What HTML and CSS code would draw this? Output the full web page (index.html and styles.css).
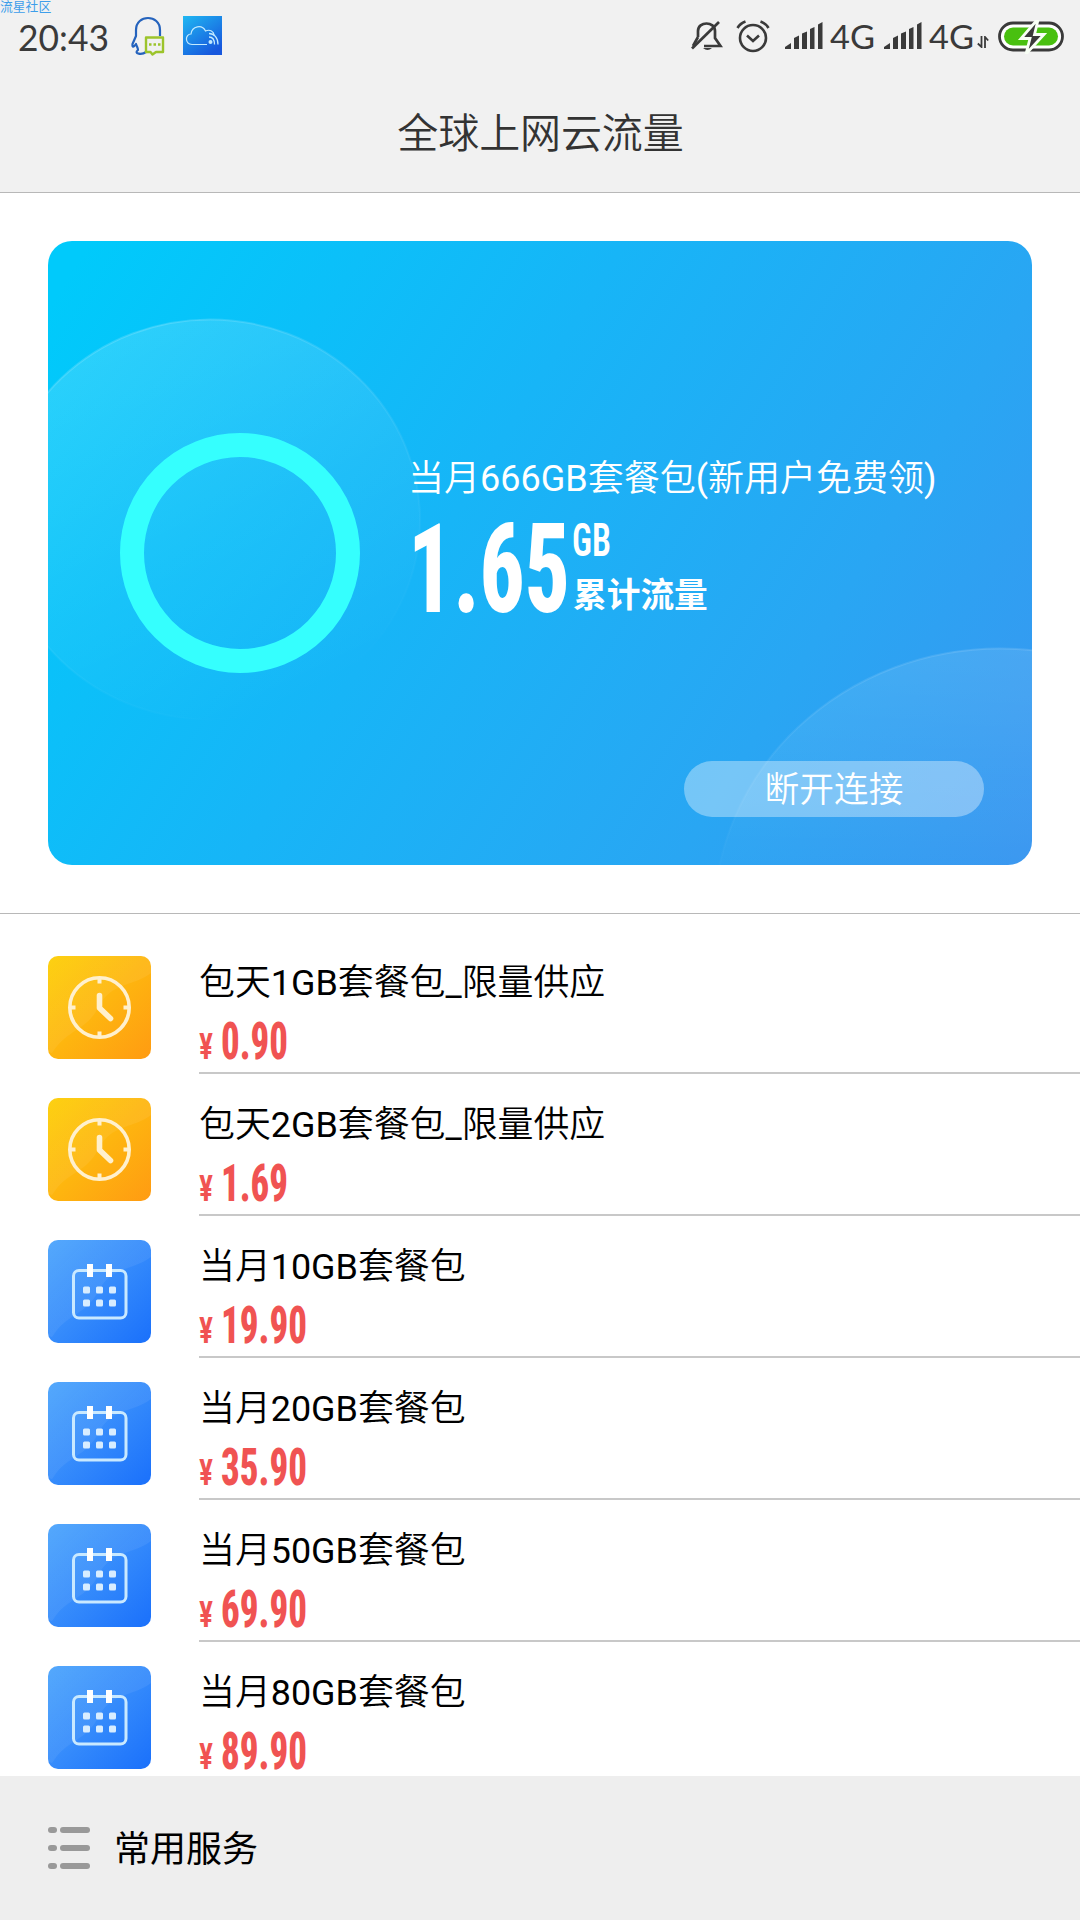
FILE: index.html
```html
<!DOCTYPE html>
<html lang="zh-CN">
<head>
<meta charset="utf-8">
<title>全球上网云流量</title>
<link rel="stylesheet" href="styles.css">
</head>
<body>
<svg class="defs" width="0" height="0" aria-hidden="true">
  <defs>
    <linearGradient id="gold" x1="0" y1="0" x2="1" y2="1"><stop offset="0" stop-color="#fdd00c"/><stop offset="1" stop-color="#ff9b12"/></linearGradient>
    <linearGradient id="blue" x1="0" y1="0" x2="1" y2="1"><stop offset="0" stop-color="#51a7fc"/><stop offset="1" stop-color="#1a70fb"/></linearGradient>
    <linearGradient id="sheen" x1="0" y1="0" x2="1" y2="1"><stop offset="0" stop-color="#fff" stop-opacity=".02"/><stop offset="1" stop-color="#fff" stop-opacity=".1"/></linearGradient>
    <symbol id="clock" viewBox="0 0 103 103">
      <rect width="103" height="103" rx="10" fill="url(#gold)"/>
      <path d="M0 10Q0 0 10 0H93Q103 0 103 10V17C84 31 64 26 51 50C38 76 20 72 4 97Q0 96 0 93Z" fill="url(#sheen)"/>
      <circle cx="51.500" cy="51.500" r="29.700" fill="none" stroke="#fff0cd" stroke-width="3.600"/>
      <path d="M51.500 23v4.500M51.500 75.500v4.500M23 51.500h4.500M75.500 51.500h4.500" stroke="#fff0cd" stroke-width="4"/>
      <path d="M51.500 39.500V52L62.500 62.500" fill="none" stroke="#fff0cd" stroke-width="5.600" stroke-linecap="round" stroke-linejoin="round"/>
    </symbol>
    <symbol id="calendar" viewBox="0 0 103 103">
      <rect width="103" height="103" rx="10" fill="url(#blue)"/>
      <path d="M0 10Q0 0 10 0H93Q103 0 103 10V17C84 31 64 26 51 50C38 76 20 72 4 97Q0 96 0 93Z" fill="url(#sheen)"/>
      <rect x="25.500" y="30.500" width="52.500" height="47.500" rx="5.500" fill="none" stroke="#c9e9ff" stroke-width="3"/>
      <path d="M39 24h6v13h-6zM58 24h6v13h-6z" fill="#fff"/>
      <g fill="#d8edff"><rect x="35" y="46.500" width="7" height="7" rx="1.500"/><rect x="48" y="46.500" width="7" height="7" rx="1.500"/><rect x="61" y="46.500" width="7" height="7" rx="1.500"/><rect x="35" y="59.500" width="7" height="7" rx="1.500"/><rect x="48" y="59.500" width="7" height="7" rx="1.500"/><rect x="61" y="59.500" width="7" height="7" rx="1.500"/></g>
    </symbol>
    <symbol id="signal" viewBox="0 0 40 30">
      <path d="M1 28v-2l6-4v6zM10 28V17l5-2.500V28zM18 28V12.500l5-2V28zM26 28V8l4.500-2V28zM34 28V3.500L38.500 1V28z" fill="#3a3a3a"/>
    </symbol>
  </defs>
</svg>

<header class="top">
  <span class="watermark">流星社区</span>
  <div class="status">
    <svg class="time" width="96" height="44"><text x="0" y="31" textLength="91" lengthAdjust="spacingAndGlyphs">20:43</text></svg>
    <svg class="qq" width="36" height="40" viewBox="0 0 36 40" fill="none">
      <path d="M31 20V14C31 -2 7 -2 7 14V20L3.500 28C3 32 5 31 7 28C8 31 9 32 9 34C4 38 13 39 17 36" stroke="#2563bd" stroke-width="2.200" stroke-linejoin="round"/>
      <path d="M17 21.500h17V36H27l-3.500 2.500L21.500 36H17z" stroke="#9cc42b" stroke-width="2.400" stroke-linejoin="round" fill="#f1f1f1"/>
      <path d="M20 28.500h2.500M24.500 28.500h2.500M29 28.500h2.500" stroke="#9cc42b" stroke-width="2.600"/>
    </svg>
    <svg class="cloud" width="39" height="39" viewBox="0 0 39 39" fill="none">
      <defs><linearGradient id="sky" x1="0" y1="0" x2=".7" y2="1"><stop offset="0" stop-color="#20b8f2"/><stop offset="1" stop-color="#1757dd"/></linearGradient></defs>
      <rect width="39" height="39" fill="url(#sky)"/>
      <path d="M24 28.500H9C1.500 28 2 18 8 18C9 10 19 8 22.500 15C27 13 31 15.500 31 19" stroke="#c3eaff" stroke-width="1.200"/>
      <path d="M26 17.500c5 0 9 4 9 11M26 21c3.500 0 5.500 3 5.500 7.500" stroke="#c3eaff" stroke-width="1.300"/><circle cx="27.500" cy="26" r="2" fill="#c3eaff"/>
    </svg>
    <span class="spacer"></span>
    <svg class="bell" width="32" height="34" viewBox="0 0 32 34" fill="none" stroke="#3a3a3a" stroke-width="2.700">
      <path d="M7 19V13C7 3 24 3 24 13V20L29.500 28H13M7 19L2 28"/>
      <path d="M1 30.500L28 4"/><path d="M12 30h9q-4.500 4-9 0z" fill="#3a3a3a" stroke="none"/>
    </svg>
    <svg class="alarm" width="34" height="34" viewBox="0 0 34 34" fill="none" stroke="#3a3a3a" stroke-width="2.600">
      <circle cx="17" cy="19" r="13"/><path d="M11 16.500l6 5.500 6-5.500M1.500 9Q4 4.500 9.500 2.500M32.500 9Q30 4.500 24.500 2.500"/>
    </svg>
    <svg class="bars" width="40" height="30"><use href="#signal"/></svg>
    <svg class="net" width="47" height="44"><text x="1" y="31.500" textLength="45" lengthAdjust="spacingAndGlyphs">4G</text></svg>
    <svg class="bars second" width="40" height="30"><use href="#signal"/></svg>
    <svg class="net" width="47" height="44"><text x="1" y="31.500" textLength="45" lengthAdjust="spacingAndGlyphs">4G</text></svg>
    <svg class="arrows" width="12" height="12" viewBox="0 0 12 12" fill="none" stroke="#3a3a3a" stroke-width="1.800"><path d="M4.500 0v11L.8 7.500M8 12V1l3.200 3.500"/></svg>
    <svg class="battery" width="66" height="34" viewBox="0 0 66 34">
      <rect x="1.500" y="3" width="63" height="27" rx="13.500" fill="#fff" stroke="#3a3a3a" stroke-width="2.800"/>
      <rect x="6" y="7.500" width="54" height="18" rx="9" fill="#49c010"/>
      <path d="M39 0L23 18.500H32L28 34L46 14.500H36.500L40 0z" fill="#3a3a3a" stroke="#f8fff5" stroke-width="2.800"/>
    </svg>
  </div>
  <h1>全球上网云流量</h1>
</header>

<main>
  <section class="summary">
    <div class="card">
      <svg class="decor" viewBox="0 0 984 624" aria-hidden="true">
        <defs>
          <linearGradient id="orbA" x1=".1" y1="0" x2=".6" y2="1"><stop offset="0" stop-color="#fff" stop-opacity=".18"/><stop offset=".6" stop-color="#fff" stop-opacity=".06"/><stop offset="1" stop-color="#fff" stop-opacity="0"/></linearGradient>
          <linearGradient id="orbB" x1="0" y1="0" x2="0" y2="1"><stop offset="0" stop-color="#fff" stop-opacity=".11"/><stop offset=".42" stop-color="#fff" stop-opacity=".01"/></linearGradient>
        </defs>
        <ellipse cx="162" cy="278.500" rx="210" ry="200" fill="url(#orbA)" stroke="url(#orbA)" stroke-width="2"/>
        <ellipse cx="952" cy="677.500" rx="286" ry="270" fill="url(#orbB)" stroke="url(#orbB)" stroke-width="2"/>
      </svg>
      <div class="usage">
        <div class="ring"></div>
        <div class="detail">
          <p class="plan">当月<b>666GB</b>套餐包<b>(</b>新用户免费领<b>)</b></p>
          <div class="amount">
            <svg class="din" width="162" height="92"><text class="big" x="0" y="89.500" textLength="162" lengthAdjust="spacingAndGlyphs">1.65</text></svg>
            <div class="unit">
              <svg class="din" width="40" height="36"><text class="gb" x="-1" y="34" textLength="39" lengthAdjust="spacingAndGlyphs">GB</text></svg>
              <span class="total">累计流量</span>
            </div>
          </div>
        </div>
      </div>
      <button class="disconnect">断开连接</button>
    </div>
  </section>

  <ul class="plans">
    <li class="row"><svg class="icon"><use href="#clock"/></svg><div class="info"><span class="name">包天<b>1GB</b>套餐包<b>_</b>限量供应</span><svg class="price" width="140" height="64"><text class="yen" x="0" y="51" textLength="14" lengthAdjust="spacingAndGlyphs">¥</text><text class="num" x="22" y="51" textLength="67" lengthAdjust="spacingAndGlyphs">0.90</text></svg></div></li>
    <li class="row"><svg class="icon"><use href="#clock"/></svg><div class="info"><span class="name">包天<b>2GB</b>套餐包<b>_</b>限量供应</span><svg class="price" width="140" height="64"><text class="yen" x="0" y="51" textLength="14" lengthAdjust="spacingAndGlyphs">¥</text><text class="num" x="22" y="51" textLength="67" lengthAdjust="spacingAndGlyphs">1.69</text></svg></div></li>
    <li class="row"><svg class="icon"><use href="#calendar"/></svg><div class="info"><span class="name">当月<b>10GB</b>套餐包</span><svg class="price" width="140" height="64"><text class="yen" x="0" y="51" textLength="14" lengthAdjust="spacingAndGlyphs">¥</text><text class="num" x="22" y="51" textLength="86" lengthAdjust="spacingAndGlyphs">19.90</text></svg></div></li>
    <li class="row"><svg class="icon"><use href="#calendar"/></svg><div class="info"><span class="name">当月<b>20GB</b>套餐包</span><svg class="price" width="140" height="64"><text class="yen" x="0" y="51" textLength="14" lengthAdjust="spacingAndGlyphs">¥</text><text class="num" x="22" y="51" textLength="86" lengthAdjust="spacingAndGlyphs">35.90</text></svg></div></li>
    <li class="row"><svg class="icon"><use href="#calendar"/></svg><div class="info"><span class="name">当月<b>50GB</b>套餐包</span><svg class="price" width="140" height="64"><text class="yen" x="0" y="51" textLength="14" lengthAdjust="spacingAndGlyphs">¥</text><text class="num" x="22" y="51" textLength="86" lengthAdjust="spacingAndGlyphs">69.90</text></svg></div></li>
    <li class="row"><svg class="icon"><use href="#calendar"/></svg><div class="info"><span class="name">当月<b>80GB</b>套餐包</span><svg class="price" width="140" height="64"><text class="yen" x="0" y="51" textLength="14" lengthAdjust="spacingAndGlyphs">¥</text><text class="num" x="22" y="51" textLength="86" lengthAdjust="spacingAndGlyphs">89.90</text></svg></div></li>
  </ul>
</main>

<footer class="services">
  <svg width="42" height="42" viewBox="0 0 42 42" fill="#999"><rect width="9" height="6" rx="3"/><rect x="12" width="30" height="6" rx="3"/><rect y="18" width="9" height="6" rx="3"/><rect x="12" y="18" width="30" height="6" rx="3"/><rect y="36" width="9" height="6" rx="3"/><rect x="12" y="36" width="30" height="6" rx="3"/></svg>
  <span>常用服务</span>
</footer>
</body>
</html>
```
FILE: styles.css
```css
* { box-sizing: border-box; margin: 0; padding: 0; }
body {
  width: 1080px;
  height: 1920px;
  overflow: hidden;
  display: flex;
  flex-direction: column;
  background: #fff;
  color: #000;
  font-family: Roboto, "Noto Sans CJK SC", sans-serif;
}
svg { display: block; flex: none; }
b { font-weight: 400; }
.defs { position: absolute; }

.top {
  position: relative;
  flex: none;
  height: 193px;
  background: #f1f1f1;
  border-bottom: 1px solid #b8b8b8;
  color: #333;
}
.watermark {
  position: absolute;
  left: 0;
  top: 0;
  font-size: 12.8px;
  line-height: 13px;
  color: #3d9eea;
}
.status {
  display: flex;
  align-items: flex-start;
  height: 72px;
  padding: 16px 16px 0 18px;
}
.time text, .net text { font-family: Lato, sans-serif; fill: #3a3a3a; }
.time text { font-size: 37px; }
.net text { font-size: 33px; }
.time { margin-top: 4px; }
.net { margin-top: 1px; margin-left: 5px; }
.qq { margin-left: 15px; }
.cloud { margin-left: 18px; }
.spacer { flex: 1; }
.bell { margin-top: 2px; }
.alarm { margin: 3px 0 0 13px; }
.bars { margin: 5px 0 0 14px; }
.bars.second { margin-left: 7px; }
.arrows { margin: 20px 1px 0 2px; }
.battery { margin: 4px 0 0 8px; }
h1 {
  font-size: 41px;
  line-height: 60px;
  font-weight: 350;
  letter-spacing: -0.1px;
  text-align: center;
  padding: 32px 0 0 1px;
}

main { flex: 1; min-height: 0; overflow: hidden; }
.summary {
  padding: 48px 48px;
  height: 721px;
  border-bottom: 1px solid #b8b8b8;
}
.card {
  position: relative;
  display: flex;
  flex-direction: column;
  height: 624px;
  border-radius: 24px;
  overflow: hidden;
  background: linear-gradient(122deg, #00cafb 3%, #17b5f7 42%, #29a6f3 74%, #3996f0 100%);
  color: #fff;
}
.decor { position: absolute; inset: 0; width: 984px; height: 624px; }
.usage { position: relative; display: flex; padding: 192px 0 0 72px; height: 520px; }
.ring {
  flex: none;
  width: 240px;
  height: 240px;
  border: 24px solid #35fffe;
  border-radius: 50%;
}
.detail { padding: 19px 0 0 48px; }
.plan { height: 54px; font-size: 36px; line-height: 54px; font-weight: 350; white-space: nowrap; }
.amount { display: flex; gap: 3px; padding-top: 16px; }
.din, .price { overflow: visible; }
.din text, .price text { font-family: Roboto, sans-serif; font-weight: 800; font-stretch: 75%; }
.din text { fill: #fff; }
.din .big { font-size: 124.500px; }
.din .gb { font-size: 45.500px; font-weight: 600; }
.unit { display: flex; flex-direction: column; }
.total { font-size: 33.700px; line-height: 40px; font-weight: 700; margin-top: 18px; }
.disconnect {
  position: relative;
  align-self: flex-end;
  width: 300px;
  height: 56px;
  margin-right: 48px;
  padding-top: 3px;
  border: 0;
  border-radius: 28px;
  background: rgba(255, 255, 255, .36);
  color: #fff;
  font: 350 34.700px/53px Roboto, "Noto Sans CJK SC", sans-serif;
}

.plans { list-style: none; padding-top: 18px; }
.row { display: flex; gap: 48px; height: 142px; padding: 24px 0 0 48px; }
.icon { width: 103px; height: 103px; }
.info { flex: 1; height: 118px; border-bottom: 2px solid #c8c8c8; }
.name { display: block; height: 52px; padding-top: 1px; font-size: 35.900px; line-height: 52px; white-space: nowrap; font-weight: 350; }
.price text { fill: #f05352; }
.price .yen { font-size: 36px; font-weight: 600; }
.price .num { font-size: 52px; }

.services {
  flex: none;
  display: flex;
  align-items: center;
  gap: 24px;
  height: 144px;
  padding: 0 48px;
  background: #eee;
  font-size: 36px;
  line-height: 50px;
}
.services span { padding-top: 4px; }
```
